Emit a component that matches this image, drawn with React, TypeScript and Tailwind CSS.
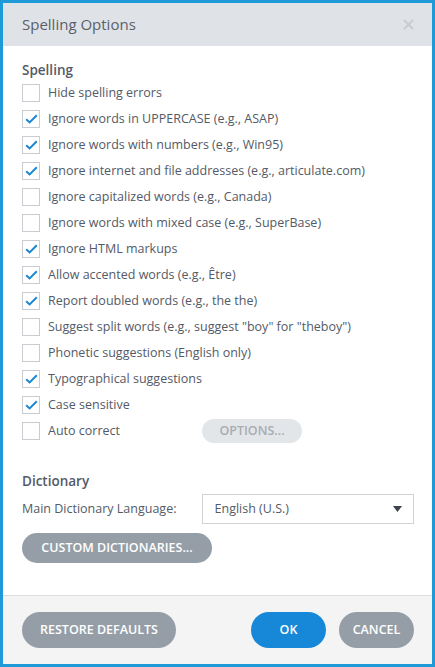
import React from "react";

const items: [string, boolean][] = [
  ["Hide spelling errors", false],
  ["Ignore words in UPPERCASE (e.g., ASAP)", true],
  ["Ignore words with numbers (e.g., Win95)", true],
  ["Ignore internet and file addresses (e.g., articulate.com)", true],
  ["Ignore capitalized words (e.g., Canada)", false],
  ["Ignore words with mixed case (e.g., SuperBase)", false],
  ["Ignore HTML markups", true],
  ["Allow accented words (e.g., Être)", true],
  ["Report doubled words (e.g., the the)", true],
  ["Suggest split words (e.g., suggest \"boy\" for \"theboy\")", false],
  ["Phonetic suggestions (English only)", false],
  ["Typographical suggestions", true],
  ["Case sensitive", true],
];

function Box({ checked }: { checked: boolean }) {
  return (
    <div className="w-[18px] h-[18px] border border-[#c9ccd0] bg-white flex items-center justify-center shrink-0">
      {checked && (
        <svg width="13" height="10" viewBox="0 0 13 10">
          <path d="M1.2 5.2 L4.6 8.4 L11.8 1.2" fill="none" stroke="#1a86d6" strokeWidth="2" />
        </svg>
      )}
    </div>
  );
}

export default function App() {
  return (
    <div
      className="w-[435px] h-[667px] border-[3px] border-[#1e9ad9] flex flex-col bg-white text-[#545a66]"
      style={{ fontFamily: '"Open Sans", "Noto Sans", sans-serif' }}
    >
      <div className="h-[43px] bg-[#dfe3e7] flex items-center justify-between pl-[19px] pr-[18px] shrink-0">
        <span className="text-[15px] text-[#5a606b]">Spelling Options</span>
        <svg width="11" height="11" viewBox="0 0 11 11">
          <path d="M1 1 L10 10 M10 1 L1 10" stroke="#c8ccd0" strokeWidth="2" />
        </svg>
      </div>
      <div className="flex-1 pl-[19px] pr-[18px] pt-[14px]">
        <div className="text-[13.5px] font-semibold leading-[20px] text-[#545a66]">Spelling</div>
        <div className="flex flex-col">
          {items.map(([t, c]) => (
            <div key={t} className="h-[26px] flex items-center gap-[8px]">
              <Box checked={c} />
              <span className="text-[12.5px]">{t}</span>
            </div>
          ))}
          <div className="h-[26px] flex items-center">
            <div className="flex items-center gap-[8px] w-[180px]">
              <Box checked={false} />
              <span className="text-[12.5px]">Auto correct</span>
            </div>
            <div className="w-[100px] h-[24px] rounded-full bg-[#e3e6e9] text-[#a9acb0] text-[12.5px] font-semibold flex items-center justify-center">
              OPTIONS...
            </div>
          </div>
        </div>
        <div className="mt-[27px] text-[13.5px] font-semibold leading-[20px]">Dictionary</div>
        <div className="flex items-center mt-[3px]">
          <span className="w-[180px] text-[12.5px]">Main Dictionary Language:</span>
          <div className="w-[213px] h-[30px] border border-[#cfd2d6] flex items-center justify-between pl-[12px] pr-[11px] text-[12.5px]">
            <span>English (U.S.)</span>
            <svg width="9" height="6" viewBox="0 0 9 6">
              <path d="M0 0 H9 L4.5 6 Z" fill="#3e434c" />
            </svg>
          </div>
        </div>
        <div className="mt-[9px] w-[190px] h-[30px] rounded-full bg-[#959ea6] text-white text-[12.5px] font-semibold flex items-center justify-center">
          CUSTOM DICTIONARIES...
        </div>
      </div>
      <div className="h-[69px] shrink-0 bg-[#f4f4f4] border-t border-[#dedede] flex items-center pl-[19px] pr-[18px]">
        <div className="w-[154px] h-[36px] rounded-full bg-[#959ea6] text-white text-[12.5px] font-semibold flex items-center justify-center">
          RESTORE DEFAULTS
        </div>
        <div className="flex-1" />
        <div className="w-[75px] h-[36px] rounded-full bg-[#1788d8] text-white text-[12.5px] font-semibold flex items-center justify-center">
          OK
        </div>
        <div className="ml-[13px] w-[75px] h-[36px] rounded-full bg-[#959ea6] text-white text-[12.5px] font-semibold flex items-center justify-center">
          CANCEL
        </div>
      </div>
    </div>
  );
}
